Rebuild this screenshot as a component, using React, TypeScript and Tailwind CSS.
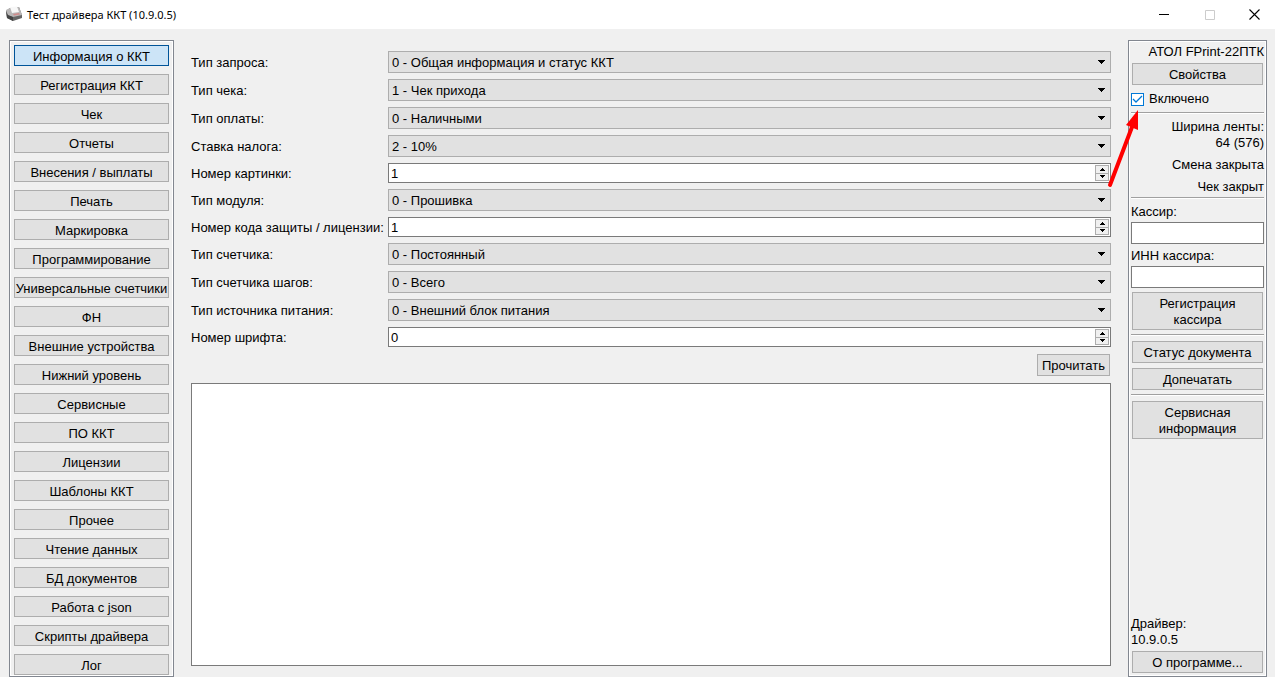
import React from 'react';

interface Field {
  id: string;
  label: string;
  value: string;
  kind: 'select' | 'number';
}

const SECTIONS = [
  'Информация о ККТ',
  'Регистрация ККТ',
  'Чек',
  'Отчеты',
  'Внесения / выплаты',
  'Печать',
  'Маркировка',
  'Программирование',
  'Универсальные счетчики',
  'ФН',
  'Внешние устройства',
  'Нижний уровень',
  'Сервисные',
  'ПО ККТ',
  'Лицензии',
  'Шаблоны ККТ',
  'Прочее',
  'Чтение данных',
  'БД документов',
  'Работа с json',
  'Скрипты драйвера',
  'Лог',
];

const FIELDS: Field[] = [
  { id: 'request', label: 'Тип запроса:', value: '0 - Общая информация и статус ККТ', kind: 'select' },
  { id: 'receipt', label: 'Тип чека:', value: '1 - Чек прихода', kind: 'select' },
  { id: 'payment', label: 'Тип оплаты:', value: '0 - Наличными', kind: 'select' },
  { id: 'tax', label: 'Ставка налога:', value: '2 - 10%', kind: 'select' },
  { id: 'picture', label: 'Номер картинки:', value: '1', kind: 'number' },
  { id: 'module', label: 'Тип модуля:', value: '0 - Прошивка', kind: 'select' },
  { id: 'license', label: 'Номер кода защиты / лицензии:', value: '1', kind: 'number' },
  { id: 'counter', label: 'Тип счетчика:', value: '0 - Постоянный', kind: 'select' },
  { id: 'steps', label: 'Тип счетчика шагов:', value: '0 - Всего', kind: 'select' },
  { id: 'power', label: 'Тип источника питания:', value: '0 - Внешний блок питания', kind: 'select' },
  { id: 'font', label: 'Номер шрифта:', value: '0', kind: 'number' },
];

const PushButton: React.FC<{ className?: string; children: React.ReactNode }> = ({
  className = 'h-[22px]',
  children,
}) => (
  <button
    type="button"
    className={`shrink-0 border border-[#adadad] bg-[#e1e1e1] pt-[2px] text-center leading-4 ${className}`}
  >
    {children}
  </button>
);

/* Etched line: grey on top, white below */
const Divider: React.FC = () => (
  <hr className="h-[2px] shrink-0 border-t border-b border-t-[#a0a0a0] border-b-white" />
);

const PrinterIcon: React.FC = () => (
  <svg width="18" height="18" viewBox="0 0 18 18" aria-hidden="true">
    <path d="M1 5 5 2l9-1 3 8v3l-9 3-6-3z" fill="#666" />
    <path d="m1 4 4-2 9-1 3 8-9 2-6-2z" fill="#b9b7b7" />
    <path d="m5 1 7-.5L14 6l-7 1z" fill="#f7f7f7" />
    <path d="m8 8 6-1 1 1.500-6 1z" fill="#d08b8b" />
    <path d="m1 5 1 7 6 3v-4l-5-2z" fill="#444" />
  </svg>
);

const TitleBar: React.FC = () => (
  <header className="flex h-[29px] shrink-0 items-center bg-white pl-[5px]">
    <PrinterIcon />
    <h1 className="ml-1 font-['Noto_Sans',sans-serif] text-[11px] leading-4">Тест драйвера ККТ (10.9.0.5)</h1>
    <div className="ml-auto flex">
      <button type="button" aria-label="Свернуть" className="flex h-7 w-[46px] items-center justify-center">
        <svg width="10" height="10" viewBox="0 0 10 10">
          <path d="M0 4h10v1H0z" fill="#000" />
        </svg>
      </button>
      <button type="button" aria-label="Развернуть" disabled className="flex h-7 w-[46px] items-center justify-center">
        <svg width="10" height="10" viewBox="0 0 10 10" fill="none" stroke="#ccc">
          <path d="M.5.5h9v9h-9z" />
        </svg>
      </button>
      <button type="button" aria-label="Закрыть" className="flex h-7 w-[42px] items-center justify-center">
        <svg width="12" height="12" viewBox="0 0 12 12" fill="none" stroke="#000" strokeWidth="1.1">
          <path d="m1.500.5 10 10m0-10-10 10" />
        </svg>
      </button>
    </div>
  </header>
);

const SelectField: React.FC<{ id: string; value: string }> = ({ id, value }) => (
  <div className="relative">
    <select
      id={id}
      defaultValue={value}
      className="block h-[22px] w-full appearance-none border border-[#adadad] bg-[#e1e1e1] pt-[2px] pl-[3px] leading-4"
    >
      <option>{value}</option>
    </select>
    <svg
      className="pointer-events-none absolute top-[9px] right-[6px]"
      width="7"
      height="4"
      viewBox="0 0 7 4"
      shapeRendering="crispEdges"
      aria-hidden="true"
    >
      <path d="M0 0h7v1H6v1H5v1H4v1H3V3H2V2H1V1H0z" />
    </svg>
  </div>
);

const NumberField: React.FC<{ id: string; value: string }> = ({ id, value }) => (
  <div className="flex h-5 border border-[#7a7a7a] bg-white pr-px">
    <input
      id={id}
      type="text"
      inputMode="numeric"
      defaultValue={value}
      className="min-w-0 flex-1 pt-[2px] pl-[2px] leading-4 outline-none"
    />
    <div className="my-px flex w-[14px] flex-col border border-[#adadad] bg-[#f0f0f0]">
      <button
        type="button"
        aria-label="Больше"
        className="flex flex-1 items-center justify-center border-b border-[#adadad]"
      >
        <svg width="5" height="3" viewBox="0 0 5 3" shapeRendering="crispEdges">
          <path d="M0 3V2h1V1h1V0h1v1h1v1h1v1z" />
        </svg>
      </button>
      <button type="button" aria-label="Меньше" className="flex flex-1 items-center justify-center">
        <svg width="5" height="3" viewBox="0 0 5 3" shapeRendering="crispEdges">
          <path d="M0 0v1h1v1h1v1h1V2h1V1h1V0z" />
        </svg>
      </button>
    </div>
  </div>
);

const Sidebar: React.FC = () => (
  <nav className="w-[165px] shrink-0 border border-[#828790]">
    <div className="flex h-full flex-col gap-2 border border-white px-[3px] pt-[3px]">
      {SECTIONS.map((name, i) => (
        <button
          key={name}
          type="button"
          className={`h-[21px] shrink-0 border pt-[2px] leading-4 whitespace-nowrap ${
            i === 0 ? 'border-[#005499] bg-[#cce4f7]' : 'border-[#adadad] bg-[#e1e1e1]'
          }`}
        >
          {name}
        </button>
      ))}
    </div>
  </nav>
);

const InfoForm: React.FC = () => (
  <main className="ml-[17px] flex min-w-0 flex-1 flex-col pt-[11px] pb-[11px]">
    <div className="grid grid-cols-[197px_1fr] items-center gap-y-[6px]">
      {FIELDS.map((field) => (
        <React.Fragment key={field.id}>
          <label htmlFor={field.id} className="pt-[2px] leading-4 whitespace-nowrap">
            {field.label}
          </label>
          {field.kind === 'select' ? (
            <SelectField id={field.id} value={field.value} />
          ) : (
            <NumberField id={field.id} value={field.value} />
          )}
        </React.Fragment>
      ))}
    </div>
    <PushButton className="mt-[7px] mr-px h-[22px] w-[73px] self-end">Прочитать</PushButton>
    <textarea
      aria-label="Результат"
      readOnly
      className="mt-[7px] w-full flex-1 resize-none border border-[#7a7a7a] bg-white"
    />
  </main>
);

const StatusPanel: React.FC = () => (
  <aside className="mr-2 ml-[17px] w-[139px] shrink-0 border border-[#828790]">
    <div className="flex h-full flex-col border border-white px-px pt-[2px] pb-[2px]">
      <p className="text-right leading-4 whitespace-nowrap">АТОЛ FPrint-22ПТК</p>
      <PushButton className="mx-px mt-[3px] h-[22px]">Свойства</PushButton>
      <div className="relative mt-[6px] mb-[5px] flex items-center gap-[5px]">
        <input
          id="enabled"
          type="checkbox"
          defaultChecked
          className="peer size-[13px] appearance-none border border-[#0078d7] bg-white"
        />
        <svg
          className="pointer-events-none absolute top-[2px] left-0 hidden peer-checked:block"
          width="13"
          height="13"
          viewBox="0 0 13 13"
          fill="none"
          stroke="#0078d7"
          strokeWidth="1.3"
          aria-hidden="true"
        >
          <path d="m2 6 3 3 6-6" />
        </svg>
        <label htmlFor="enabled" className="leading-4">
          Включено
        </label>
        {/* Pointer to the checkbox */}
        <svg
          className="pointer-events-none absolute top-[18px] right-[124px]"
          width="34"
          height="80"
          viewBox="0 0 34 80"
          aria-hidden="true"
        >
          <path d="m4 76 22-58" stroke="#f00" strokeWidth="4" strokeLinecap="round" />
          <path d="M32 1 20 16l12 5z" fill="#f00" />
        </svg>
      </div>
      <Divider />
      <p className="mt-[5px] text-right leading-4">
        Ширина ленты:
        <br />
        64 (576)
      </p>
      <p className="mt-[6px] text-right leading-4">Смена закрыта</p>
      <p className="mt-[6px] mb-[2px] text-right leading-4">Чек закрыт</p>
      <Divider />
      <label htmlFor="cashier" className="mt-[5px] leading-4">
        Кассир:
      </label>
      <input id="cashier" type="text" className="mt-[2px] h-[22px] border border-[#7a7a7a] bg-white px-[2px]" />
      <label htmlFor="cashier-inn" className="mt-1 leading-4">
        ИНН кассира:
      </label>
      <input id="cashier-inn" type="text" className="mt-[2px] h-[22px] border border-[#7a7a7a] bg-white px-[2px]" />
      <PushButton className="mx-px mt-1 mb-1 h-[38px] px-4">Регистрация кассира</PushButton>
      <Divider />
      <PushButton className="mx-px mt-[5px] h-[22px]">Статус документа</PushButton>
      <PushButton className="mx-px mt-[5px] mb-1 h-[22px]">Допечатать</PushButton>
      <Divider />
      <PushButton className="mx-px mt-[5px] h-[38px] px-4">Сервисная информация</PushButton>
      <p className="mt-auto leading-4">
        Драйвер:
        <br />
        10.9.0.5
      </p>
      <PushButton className="mx-px mt-[3px] h-[22px]">О программе...</PushButton>
    </div>
  </aside>
);

export default function App() {
  return (
    <div className="flex min-h-screen flex-col bg-[#f0f0f0] font-['Liberation_Sans',sans-serif] text-[13px] text-black">
      <TitleBar />
      <div className="flex flex-1 pt-[11px] pl-[9px]">
        <Sidebar />
        <InfoForm />
        <StatusPanel />
      </div>
    </div>
  );
}
